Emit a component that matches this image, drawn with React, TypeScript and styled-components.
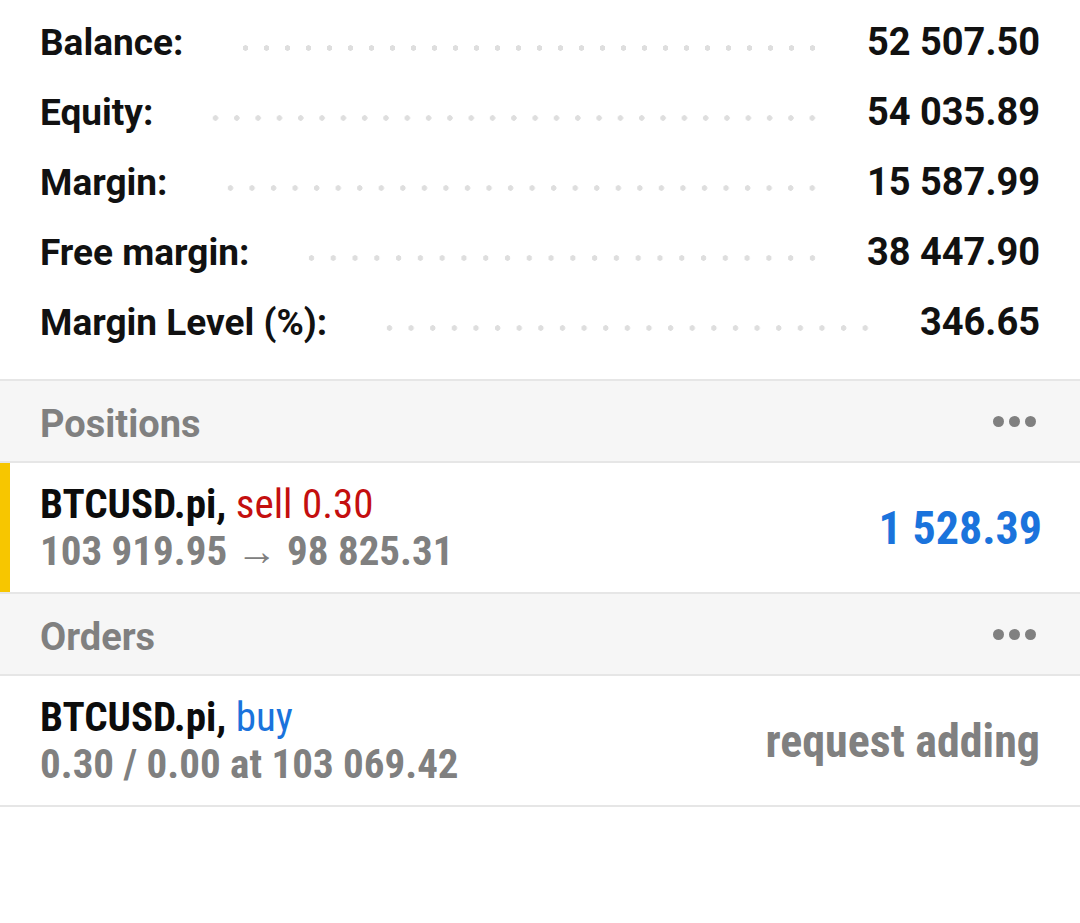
import React from 'react';
import styled, { createGlobalStyle } from 'styled-components';

const GlobalStyle = createGlobalStyle`
  html, body {
    margin: 0;
    padding: 0;
    background: #ffffff;
  }
  body {
    font-family: Roboto, "Noto Sans", sans-serif;
    -webkit-font-smoothing: antialiased;
  }
`;

const condensed = `"Roboto Condensed", "Liberation Sans Narrow", Roboto, sans-serif`;

const Page = styled.div`
  width: 1080px;
  height: 923px;
  background: #fff;
  overflow: hidden;
`;

const Summary = styled.div`
  padding: 7px 40px 22px 40px;
  border-bottom: 2px solid #e6e6e6;
`;

const SummaryRow = styled.div`
  display: flex;
  align-items: center;
  height: 70px;
`;

const Label = styled.span`
  font-size: 37px;
  font-weight: 700;
  color: #111;
  white-space: nowrap;
`;

// dotted leader between label and value
const Leader = styled.span`
  flex: 1;
  height: 6px;
  margin: 12px 44px 0 52px;
  background-image: radial-gradient(circle, #dedede 2.5px, transparent 3px);
  background-size: 21px 6px;
  background-repeat: space no-repeat;
`;

const Value = styled.span`
  font-size: 38px;
  font-weight: 700;
  color: #111;
  white-space: nowrap;
`;

const SectionHeader = styled.div`
  display: flex;
  align-items: center;
  justify-content: space-between;
  box-sizing: border-box;
  height: 82px;
  padding: 6px 40px 0 40px;
  background: #f6f6f6;
  border-bottom: 2px solid #e6e6e6;
`;

const SectionTitle = styled.span`
  font-size: 38px;
  font-weight: 700;
  color: #808080;
`;

const MoreDots = styled.span`
  display: flex;
  gap: 5px;
  margin-right: 4px;
  margin-top: -6px;
`;

const Dot = styled.span`
  width: 11px;
  height: 11px;
  border-radius: 50%;
  background: #808080;
`;

const TradeRow = styled.div<{ $accent?: string }>`
  display: flex;
  align-items: center;
  justify-content: space-between;
  height: 129px;
  padding: 0 38px 0 40px;
  border-bottom: 2px solid #e6e6e6;
  box-shadow: inset ${p => (p.$accent ? '10px 0 0 ' + p.$accent : '0 0 0 transparent')};
`;

const TradeInfo = styled.div`
  display: flex;
  flex-direction: column;
  font-family: ${condensed};
  font-stretch: condensed;
`;

const Symbol = styled.div`
  font-size: 41px;
  line-height: 47px;
  font-weight: 700;
  color: #0c0c0c;
`;

const Side = styled.span<{ $color: string }>`
  font-weight: 400;
  color: ${p => p.$color};
`;

const Details = styled.div`
  font-size: 41px;
  line-height: 47px;
  font-weight: 700;
  color: #808080;
`;

const Profit = styled.span`
  font-family: ${condensed};
  font-stretch: condensed;
  font-size: 46px;
  font-weight: 700;
  color: #1a73dc;
`;

const Status = styled.span`
  font-family: ${condensed};
  font-stretch: condensed;
  font-size: 46px;
  font-weight: 700;
  color: #808080;
  margin-right: 2px;
`;

const summary = [
  { label: 'Balance:', value: '52 507.50' },
  { label: 'Equity:', value: '54 035.89' },
  { label: 'Margin:', value: '15 587.99' },
  { label: 'Free margin:', value: '38 447.90' },
  { label: 'Margin Level (%):', value: '346.65' },
];

const More = () => (
  <MoreDots>
    <Dot />
    <Dot />
    <Dot />
  </MoreDots>
);

const App: React.FC = () => {
  return (
    <Page>
      <GlobalStyle />
      <Summary>
        {summary.map(item => (
          <SummaryRow key={item.label}>
            <Label>{item.label}</Label>
            <Leader />
            <Value>{item.value}</Value>
          </SummaryRow>
        ))}
      </Summary>

      <SectionHeader>
        <SectionTitle>Positions</SectionTitle>
        <More />
      </SectionHeader>
      <TradeRow $accent="#f7c600">
        <TradeInfo>
          <Symbol>
            BTCUSD.pi, <Side $color="#c40f0f">sell 0.30</Side>
          </Symbol>
          <Details>103 919.95 → 98 825.31</Details>
        </TradeInfo>
        <Profit>1 528.39</Profit>
      </TradeRow>

      <SectionHeader>
        <SectionTitle>Orders</SectionTitle>
        <More />
      </SectionHeader>
      <TradeRow>
        <TradeInfo>
          <Symbol>
            BTCUSD.pi, <Side $color="#1a73dc">buy</Side>
          </Symbol>
          <Details>0.30 / 0.00 at 103 069.42</Details>
        </TradeInfo>
        <Status>request adding</Status>
      </TradeRow>
    </Page>
  );
};

export default App;
